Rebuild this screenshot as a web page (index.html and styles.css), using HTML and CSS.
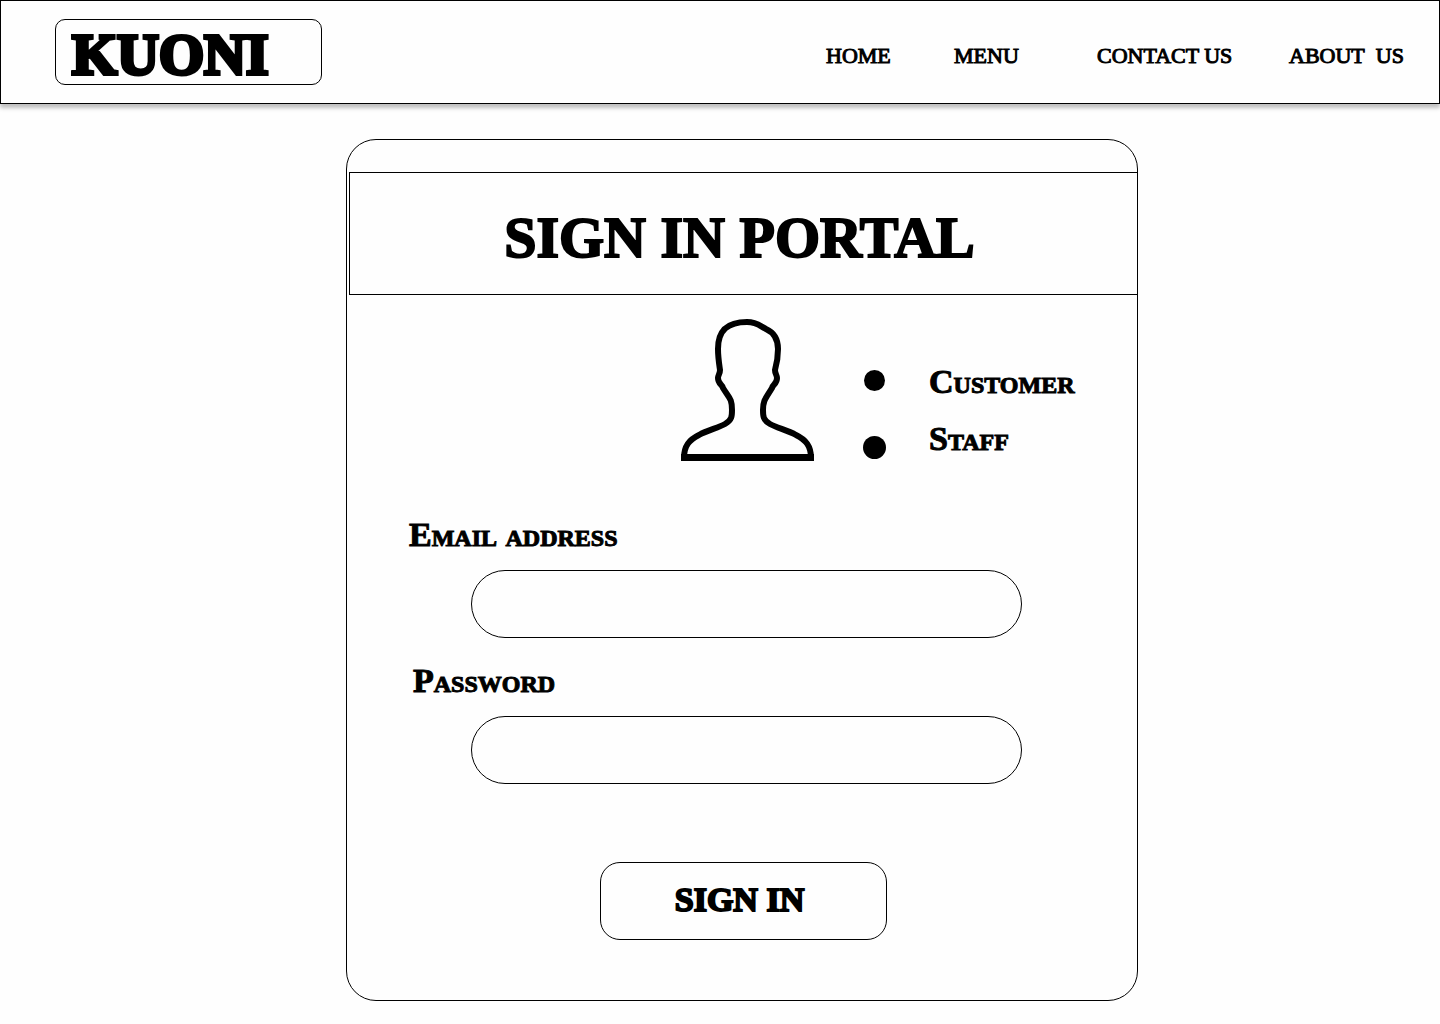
FILE: index.html
```html
<!DOCTYPE html>
<html lang="en">
<head>
  <meta charset="utf-8">
  <meta name="viewport" content="width=device-width, initial-scale=1">
  <title>Kuoni – Sign in portal</title>
  <link rel="stylesheet" href="styles.css">
</head>
<body>
  <header class="site-header">
    <a class="logo" href="#">KUONI</a>
    <nav class="site-nav">
      <a href="#">HOME</a>
      <a href="#">MENU</a>
      <a href="#">CONTACT US</a>
      <a href="#">ABOUT&nbsp; US</a>
    </nav>
  </header>

  <main class="page">
    <form class="card">
      <div class="banner">
        <h1 class="title">SIGN IN PORTAL</h1>
      </div>

      <div class="identity">
        <svg class="avatar" viewBox="0 0 133 143" aria-hidden="true">
          <path d="M3 140C3 128 8 122 18 117C27 112 37 110 44 106C51 102 51 98 51 92C51 80 48 80 42 70C41 66 37 66 37 60C37 57 39 56 39 52C38 45 37 39 37 31C37 12 47 4 66 4C76 4 79 8 85 11C94 15 97 22 97 31C97 39 96 45 94 52C94 56 96 57 96 60C96 66 92 66 91 70C85 80 82 82 82 92C82 98 82 102 89 106C96 110 106 112 115 117C125 122 130 128 130 140" fill="none" stroke="#000" stroke-width="6"/>
          <path d="M0 136H133V143H0Z"/>
        </svg>
        <div class="dots">
          <input class="dot" type="radio" name="role" id="customer">
          <input class="dot dot-large" type="radio" name="role" id="staff">
        </div>
        <div class="roles">
          <label class="label" for="customer">Customer</label>
          <label class="label" for="staff">Staff</label>
        </div>
      </div>

      <div class="field">
        <label class="label" for="email">Email address</label>
        <input class="text-box" type="email" id="email">
      </div>
      <div class="field field-password">
        <label class="label" for="password">Password</label>
        <input class="text-box" type="password" id="password">
      </div>

      <button class="submit" type="submit">SIGN IN</button>
    </form>
  </main>
</body>
</html>
```
FILE: styles.css
```css
*,
*::before,
*::after {
  box-sizing: border-box;
}

body {
  margin: 0;
  background: #fefefe;
  color: #000;
  font-family: "Liberation Serif", serif;
}

a {
  color: inherit;
  text-decoration: none;
}

.site-header {
  display: flex;
  align-items: center;
  justify-content: space-between;
  padding: 18px 37px 18px 54px;
  border: 1px solid #000;
  box-shadow: 0 4px 4px rgba(0, 0, 0, 0.25);
}

.logo {
  width: 267px;
  padding: 6px 16px 0;
  border: 1px solid #000;
  border-radius: 10px;
  font-size: 58px;
  font-weight: 700;
  line-height: 58px;
  -webkit-text-stroke: 4px #000;
}

.site-nav {
  display: grid;
  grid-template-columns: 128px 143px 192px 113px;
  padding-top: 8px;
  font-size: 22px;
  line-height: 28px;
  white-space: nowrap;
  -webkit-text-stroke: 1px #000;
}

.page {
  padding: 35px 0 23px 44px;
}

.card {
  max-width: 792px;
  margin: 0 auto;
  padding: 32px 0 60px;
  border: 1px solid #000;
  border-radius: 30px;
}

.banner {
  margin: 0 -1px 0 2px;
  padding: 33px 8px 24px 0;
  border: 1px solid #000;
}

.title {
  margin: 0;
  font-size: 58px;
  line-height: 64px;
  text-align: center;
  -webkit-text-stroke: 2px #000;
}

.identity {
  display: flex;
  margin-top: 23px;
  padding-left: 334px;
}

.avatar {
  width: 133px;
  height: 143px;
}

.dots {
  display: flex;
  flex-direction: column;
  align-items: center;
  gap: 45px;
  margin: 52px 43px 0 49px;
}

.dot {
  appearance: none;
  width: 21px;
  height: 21px;
  margin: 0;
  border-radius: 50%;
  background: #000;
}

.dot-large {
  width: 23px;
  height: 23px;
}

.roles {
  display: flex;
  flex-direction: column;
  gap: 17px;
  padding-top: 44px;
}

.label {
  font-size: 34px;
  font-weight: 700;
  font-variant: small-caps;
  line-height: 40px;
  -webkit-text-stroke: 1px #000;
}

.field {
  display: flex;
  flex-direction: column;
  gap: 15px;
  margin-top: 54px;
  padding: 0 115px 0 62px;
}

.field-password {
  margin-top: 23px;
  padding-left: 66px;
}

.text-box {
  height: 68px;
  margin-left: 62px;
  padding: 0 32px;
  border: 1px solid #000;
  border-radius: 34px;
  background: transparent;
  font: inherit;
  font-size: 22px;
}

.field-password .text-box {
  margin-left: 58px;
}

.submit {
  display: block;
  width: 287px;
  height: 78px;
  margin: 78px 0 0 253px;
  padding: 0 8px 2px 0;
  border: 1px solid #000;
  border-radius: 20px;
  background: transparent;
  color: #000;
  font: 700 34px/40px "Liberation Serif", serif;
  -webkit-text-stroke: 2px #000;
}
```
